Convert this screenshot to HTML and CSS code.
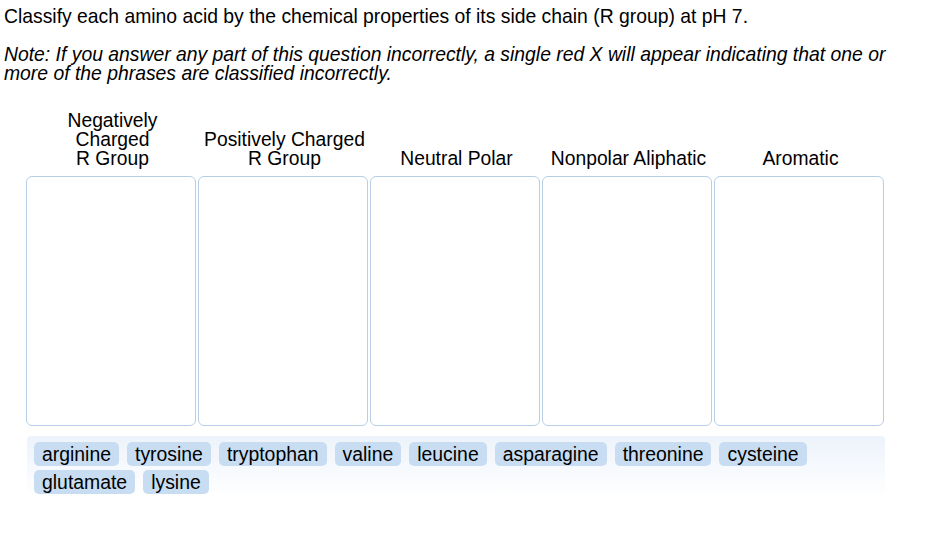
FILE: index.html
```html
<!DOCTYPE html>
<html>
<head>
<meta charset="utf-8">
<link rel="stylesheet" href="styles.css">
</head>
<body>
<div class="page">
  <p class="prompt">Classify each amino acid by the chemical properties of its side chain (R group) at pH 7.</p>
  <p class="note">Note: If you answer any part of this question incorrectly, a single red X will appear indicating that one or more of the phrases are classified incorrectly.</p>
  <div class="board">
    <div class="head">Negatively<br>Charged<br>R Group</div>
    <div class="head">Positively Charged<br>R Group</div>
    <div class="head">Neutral Polar</div>
    <div class="head">Nonpolar Aliphatic</div>
    <div class="head">Aromatic</div>
    <div class="bin"></div>
    <div class="bin"></div>
    <div class="bin"></div>
    <div class="bin"></div>
    <div class="bin"></div>
  </div>
  <div class="tray">
    <span class="chip">arginine</span>
    <span class="chip">tyrosine</span>
    <span class="chip">tryptophan</span>
    <span class="chip">valine</span>
    <span class="chip">leucine</span>
    <span class="chip">asparagine</span>
    <span class="chip">threonine</span>
    <span class="chip">cysteine</span>
    <span class="chip">glutamate</span>
    <span class="chip">lysine</span>
  </div>
</div>
</body>
</html>
```
FILE: styles.css
```css
html, body {
  margin: 0;
  padding: 0;
  background: #fff;
}
body {
  font-family: "Liberation Sans", Arial, sans-serif;
  color: #000;
}
.page {
  padding: 5px 4px;
}
.prompt {
  margin: 0;
  font-size: 19.35px;
  line-height: 22px;
}
.note {
  margin: 18px 0 0;
  font-size: 19.35px;
  line-height: 18.5px;
  font-style: italic;
  width: 900px;
}
.board {
  margin: 29px 0 0 22px;
  display: grid;
  grid-template-columns: repeat(5, 170px);
  column-gap: 2px;
  row-gap: 8px;
}
.head {
  display: flex;
  align-items: flex-end;
  justify-content: center;
  text-align: center;
  font-size: 19.3px;
  line-height: 19px;
  padding-left: 3px;
}
.bin {
  height: 248px;
  border: 1px solid #b7cfe6;
  border-radius: 6px;
}
.tray {
  margin: 10px 0 0 23px;
  width: 844px;
  padding: 6px 7px 4px;
  display: flex;
  flex-wrap: wrap;
  gap: 4px 8px;
  border-radius: 4px;
  background: linear-gradient(to bottom, #edf3fb, #ffffff);
}
.chip {
  display: inline-block;
  background: #c8ddf2;
  border-radius: 5px;
  padding: 0 8px;
  height: 24px;
  line-height: 24px;
  font-size: 19.4px;
}
```
